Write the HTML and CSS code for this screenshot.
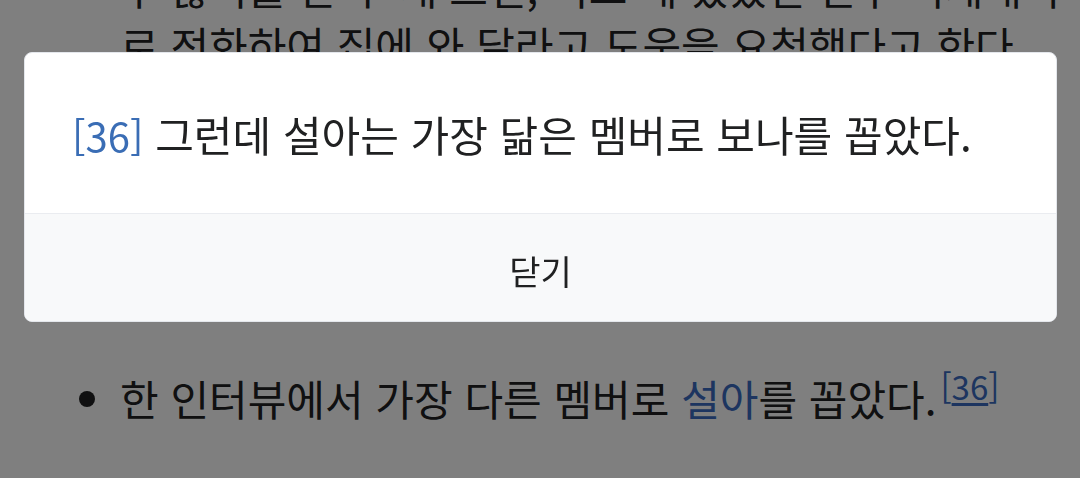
FILE: index.html
```html
<!DOCTYPE html>
<html lang="ko">
<head>
<meta charset="utf-8">
<title>참조</title>
<link rel="stylesheet" href="styles.css">
</head>
<body>
<main class="page">
  <ul class="list">
    <li class="item item-cont">수 많이를 한 두 개 쓰던, 이스 네 였었던 친구 이세내 우<br>로 전화하여 집에 와 달라고 도움을 요청했다고 한다.</li>
    <li class="item">그런데 설아는 가장 닮은 멤버로 보나를 꼽았다.</li>
    <li class="item">데뷔 전 연습생 시절을 함께 보냈다.</li>
    <li class="item">숙소에서 같은 방을 사용했다.</li>
    <li class="item">예능 프로그램에 함께 출연했다.</li>
    <li class="item item-gap">한 인터뷰에서 가장 다른 멤버로 <a class="link" href="#">설아</a>를 꼽았다.<sup class="ref"><a href="#">[<span class="ref-num">36</span>]</a></sup></li>
  </ul>
</main>
<div class="overlay">
  <div class="dialog">
    <div class="dialog-body">
      <p class="dialog-text"><a class="dialog-ref" href="#">[36]</a> 그런데 설아는 가장 닮은 멤버로 보나를 꼽았다.</p>
    </div>
    <div class="dialog-footer">닫기</div>
  </div>
</div>
</body>
</html>
```

FILE: styles.css
```css
html, body {
  margin: 0;
  padding: 0;
  height: 100%;
  overflow: hidden;
}
body {
  background: #ffffff;
  color: #202122;
  font-family: "Noto Sans CJK KR", "Noto Sans", sans-serif;
}
.page {
  margin-top: -42px;
  padding: 0 20px 0 120px;
}
.list {
  list-style: none;
  margin: 0;
  padding: 0;
}
.item {
  position: relative;
  font-size: 42px;
  line-height: 58px;
  white-space: nowrap;
}
.item-gap {
  margin-top: 63px;
}
.item::before {
  content: "";
  position: absolute;
  left: -41px;
  top: 22px;
  width: 16px;
  height: 16px;
  border-radius: 50%;
  background: #202122;
}
.item-cont::before {
  display: none;
}
.link {
  color: #3a6bc0;
  text-decoration: none;
}
.ref {
  font-size: 33px;
  line-height: 0;
  vertical-align: 16px;
  margin-left: 4px;
}
.ref a {
  color: #3a6bc0;
  text-decoration: none;
}
.ref-num {
  text-decoration: underline;
  text-underline-offset: 3px;
}
.overlay {
  position: fixed;
  inset: 0;
  background: rgba(0, 0, 0, 0.5);
  display: flex;
  align-items: flex-start;
  padding: 52px 23px 0 24px;
}
.dialog {
  flex: 1;
  background: #ffffff;
  border-radius: 8px;
  overflow: hidden;
  border: 1px solid #e4e7ec;
}
.dialog-body {
  height: 160px;
  box-sizing: border-box;
  padding: 0 47px;
  display: flex;
  align-items: center;
}
.dialog-text {
  margin: 0;
  font-size: 42px;
  color: #202122;
  white-space: nowrap;
}
.dialog-ref {
  color: #3a6db5;
  text-decoration: none;
  font-size: 40px;
}
.dialog-footer {
  height: 108px;
  box-sizing: border-box;
  padding-top: 5px;
  background: #f8f9fa;
  border-top: 1px solid #eaecf0;
  display: flex;
  align-items: center;
  justify-content: center;
  font-size: 34px;
  color: #202122;
}
```
